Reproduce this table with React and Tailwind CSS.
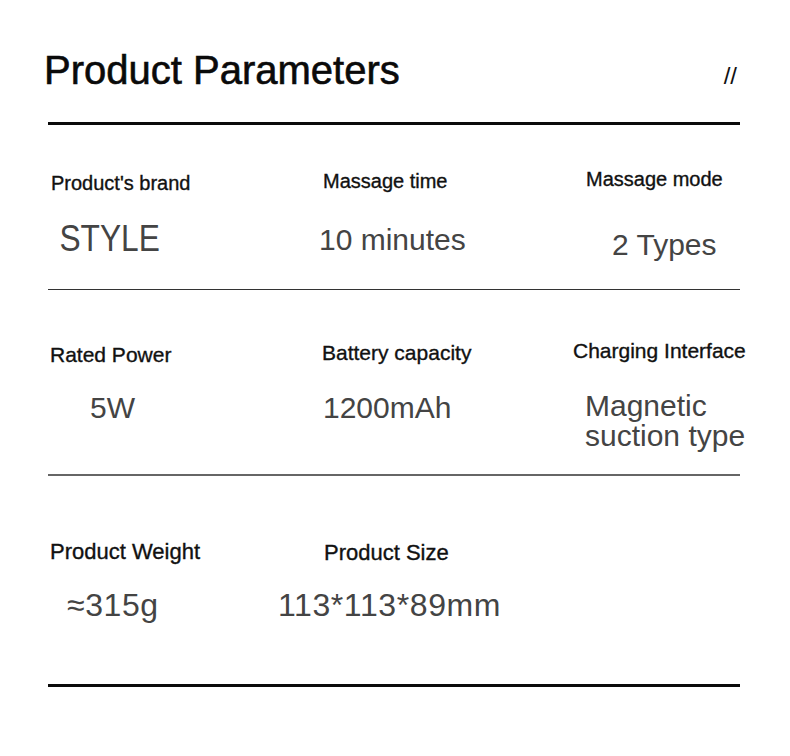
import React from "react";

const sans = { fontFamily: '"Liberation Sans", Arial, sans-serif' };

const rows = [
  {
    height: "h-[164px]",
    cells: [
      { label: "Product's brand", labelCls: "pt-[46px] pl-[3px] text-[20px]", value: "STYLE", valueCls: "mt-[26px] pl-[13px] text-[36px] leading-[36px] text-[#5a5a5a] scale-x-[0.88] origin-left" },
      { label: "Massage time", labelCls: "pt-[44px] pl-[3px] text-[20px]", value: "10 minutes", valueCls: "mt-[29px] ml-[-1px] leading-[36px]" },
      { label: "Massage mode", labelCls: "pt-[42px] pl-[16px] text-[20px]", value: "2 Types", valueCls: "mt-[36px] pl-[42px] leading-[36px]" },
    ],
  },
  {
    height: "h-[184px]",
    cells: [
      { label: "Rated Power", labelCls: "pt-[53px] pl-[2px] text-[21px]", value: "5W", valueCls: "mt-[23px] pl-[42px] leading-[36px]" },
      { label: "Battery capacity", labelCls: "pt-[51px] pl-[2px] text-[21px]", value: "1200mAh", valueCls: "mt-[25px] pl-[3px] leading-[36px]" },
      { label: "Charging Interface", labelCls: "pt-[49px] pl-[3px] text-[21px]", value: "Magnetic\nsuction type", valueCls: "mt-[28px] pl-[15px] leading-[30px] whitespace-pre" },
    ],
  },
  {
    height: "h-[208px]",
    cells: [
      { label: "Product Weight", labelCls: "pt-[62px] pl-[2px] text-[22px] leading-[28px]", value: "≈315g", valueCls: "mt-[21px] pl-[19px] text-[32px] leading-[36px] tracking-[0.6px]" },
      { label: "Product Size", labelCls: "pt-[63px] pl-[4px] text-[22px] leading-[28px]", value: "113*113*89mm", valueCls: "mt-[20px] ml-[-42px] text-[32px] leading-[36px] tracking-[0.6px]" },
      null,
    ],
  },
];

function Cell({ cell }) {
  if (!cell) return <div />;
  const valueSize = cell.valueCls.includes("text-[3") ? "" : "text-[30px]";
  return (
    <div className="flex flex-col whitespace-nowrap">
      <div className={`leading-[24px] text-[#111] [-webkit-text-stroke:0.35px_#111] ${cell.labelCls}`}>{cell.label}</div>
      <div className={`text-[#444] ${valueSize} ${cell.valueCls}`}>{cell.value}</div>
    </div>
  );
}

export default function App() {
  return (
    <div className="w-[790px] h-[756px] bg-white overflow-hidden" style={sans}>
      <div className="flex items-baseline justify-between pt-[46px] pl-[44px] pr-[53px]">
        <h1 className="text-[40px] leading-[48px] text-[#0a0a0a] [-webkit-text-stroke:0.6px_#0a0a0a]">Product Parameters</h1>
        <span className="text-[24px] text-[#111]">//</span>
      </div>

      <div className="mx-[48px] w-[692px] mt-[28px]">
        <div className="h-[3px] bg-[#0a0a0a]" />
        {rows.map((row, i) => (
          <React.Fragment key={i}>
            <div className={`grid grid-cols-[272px_250px_1fr] ${row.height}`}>
              {row.cells.map((c, j) => (
                <Cell key={j} cell={c} />
              ))}
            </div>
            {i === 0 && <div className="h-px bg-[#333]" />}
            {i === 1 && <div className="h-[2px] bg-[#666]" />}
            {i === 2 && <div className="h-[3px] bg-[#0a0a0a]" />}
          </React.Fragment>
        ))}
      </div>
    </div>
  );
}
